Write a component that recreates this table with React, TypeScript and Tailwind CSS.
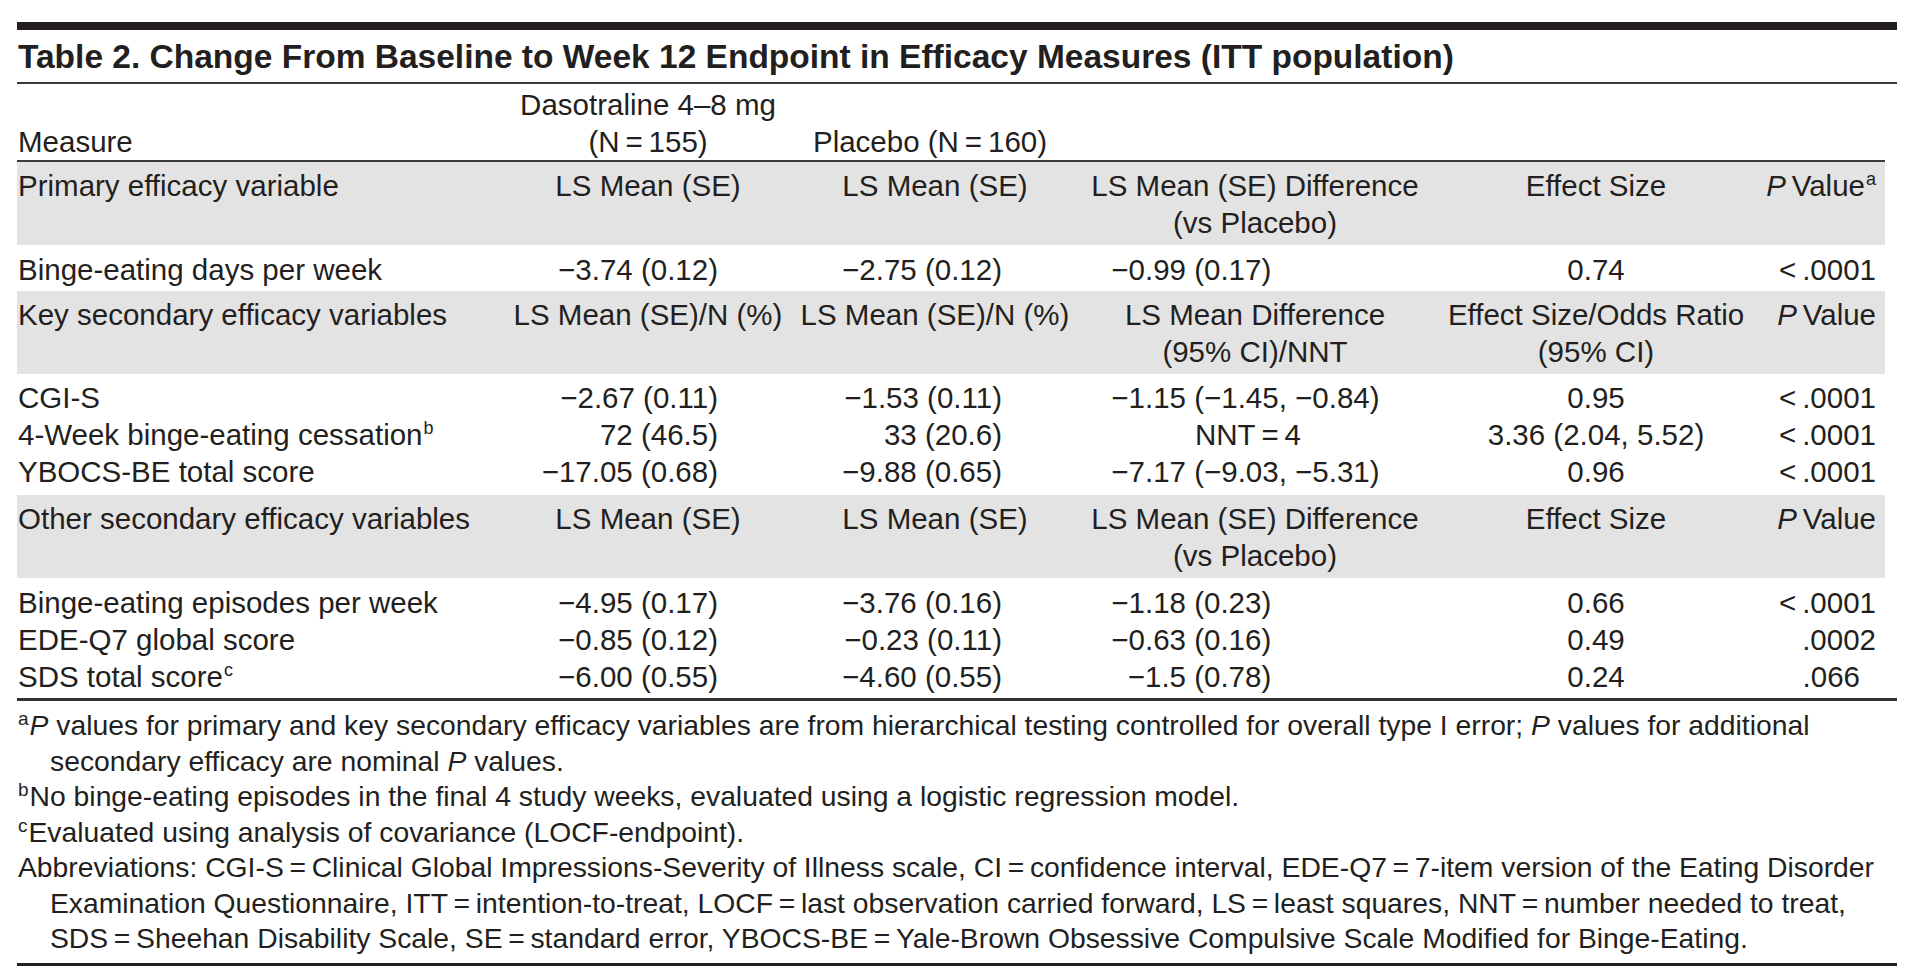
import React from 'react';

// minus sign and "=" with thin spaces, as the typeset table uses them
const M = '\u2212';
const EQ = '\u2009=\u2009';

const COLS = 'grid grid-cols-[483px_296px_278px_362px_320px_129px]';

const Sup = ({ children }: { children: React.ReactNode }) => (
  <sup className="text-[18px] top-[-11px] ml-[1px]">{children}</sup>
);

const PValue = ({ note }: { note?: string }) => (
  <span>
    <i>P</i>{'\u2009'}Value{note && <Sup>{note}</Sup>}
  </span>
);

interface HeadProps {
  label: string;
  c2: React.ReactNode;
  c3: React.ReactNode;
  c4: React.ReactNode;
  c5: React.ReactNode;
  c6: React.ReactNode;
}

const SectionHead = ({ label, c2, c3, c4, c5, c6 }: HeadProps) => (
  <div className={`${COLS} bg-[#e3e3e3] pt-[5px] pb-[4px]`}>
    <div className="pl-[1px]">{label}</div>
    <div className="text-center">{c2}</div>
    <div className="text-center">{c3}</div>
    <div className="text-center">{c4}</div>
    <div className="text-center">{c5}</div>
    <div className="text-right pr-[9px]">{c6}</div>
  </div>
);

interface Row {
  label: React.ReactNode;
  drug: string;
  placebo: string;
  diff: string;
  es: string;
  p: string;
  pShift?: boolean;
}

// difference column is aligned on the first number, like the print
const Diff = ({ v }: { v: string }) => {
  if (v.startsWith('NNT')) return <div className="text-center pr-[14px]">{v}</div>;
  const i = v.indexOf(' ');
  return (
    <div className="pl-[36px] whitespace-nowrap">
      <span className="inline-block w-[76px] text-right">{v.slice(0, i)}</span>
      {v.slice(i)}
    </div>
  );
};

const DataRow = ({ r }: { r: Row }) => (
  <div className={COLS}>
    <div className="pl-[1px] whitespace-nowrap">{r.label}</div>
    <div className="text-right pr-[78px]">{r.drug}</div>
    <div className="text-right pr-[72px]">{r.placebo}</div>
    <Diff v={r.diff} />
    <div className="text-center">{r.es}</div>
    <div className={r.pShift ? 'text-right pr-[25px]' : 'text-right pr-[9px]'}>{r.p}</div>
  </div>
);

const LT = '<\u2009.0001';

const primary: Row[] = [
  { label: 'Binge-eating days per week', drug: `${M}3.74 (0.12)`, placebo: `${M}2.75 (0.12)`, diff: `${M}0.99 (0.17)`, es: '0.74', p: LT },
];

const keySecondary: Row[] = [
  { label: 'CGI-S', drug: `${M}2.67 (0.11)`, placebo: `${M}1.53 (0.11)`, diff: `${M}1.15 (${M}1.45, ${M}0.84)`, es: '0.95', p: LT },
  {
    label: (
      <span>
        4-Week binge-eating cessation<Sup>b</Sup>
      </span>
    ),
    drug: '72 (46.5)',
    placebo: '33 (20.6)',
    diff: `NNT${EQ}4`,
    es: '3.36 (2.04, 5.52)',
    p: LT,
  },
  { label: 'YBOCS-BE total score', drug: `${M}17.05 (0.68)`, placebo: `${M}9.88 (0.65)`, diff: `${M}7.17 (${M}9.03, ${M}5.31)`, es: '0.96', p: LT },
];

const otherSecondary: Row[] = [
  { label: 'Binge-eating episodes per week', drug: `${M}4.95 (0.17)`, placebo: `${M}3.76 (0.16)`, diff: `${M}1.18 (0.23)`, es: '0.66', p: LT },
  { label: 'EDE-Q7 global score', drug: `${M}0.85 (0.12)`, placebo: `${M}0.23 (0.11)`, diff: `${M}0.63 (0.16)`, es: '0.49', p: '.0002' },
  {
    label: (
      <span>
        SDS total score<Sup>c</Sup>
      </span>
    ),
    drug: `${M}6.00 (0.55)`,
    placebo: `${M}4.60 (0.55)`,
    diff: `${M}1.5 (0.78)`,
    es: '0.24',
    p: '.066',
    pShift: true,
  },
];

const FootSup = ({ children }: { children: React.ReactNode }) => (
  <sup className="text-[19px] top-[-10px] mr-[1px]">{children}</sup>
);

export default function App() {
  return (
    <div className="min-h-screen bg-white text-[#231f20] font-['Liberation_Sans',Arial,sans-serif]">
      <div className="w-[1880px] ml-[17px] pt-[22px]">
        <div className="h-[8px] bg-[#231f20]" />
        <h1 className="mt-[7px] text-[33.5px] leading-[40px] font-bold whitespace-nowrap pl-[1px]">
          Table 2. Change From Baseline to Week 12 Endpoint in Efficacy Measures (ITT population)
        </h1>
        <div className="mt-[5px] h-[2px] bg-[#3a3a3a]" />

        <div className="text-[29.5px] leading-[37px]">
          {/* column heads */}
          <div className={`${COLS} pt-[2px] items-end`}>
            <div className="pl-[1px]">Measure</div>
            <div className="text-center">
              Dasotraline 4–8 mg
              <br />
              (N{EQ}155)
            </div>
            <div className="text-center pr-[10px] whitespace-nowrap">Placebo (N{EQ}160)</div>
            <div />
            <div />
            <div />
          </div>
          <div className="w-[1868px] h-[2px] bg-[#3a3a3a]" />

          <div className="w-[1868px]">
            <SectionHead
              label="Primary efficacy variable"
              c2="LS Mean (SE)"
              c3="LS Mean (SE)"
              c4={
                <>
                  LS Mean (SE) Difference
                  <br />
                  (vs Placebo)
                </>
              }
              c5="Effect Size"
              c6={<PValue note="a" />}
            />
            <div className="pt-[6px] pb-[3px]">
              {primary.map((r, i) => (
                <DataRow key={i} r={r} />
              ))}
            </div>

            <SectionHead
              label="Key secondary efficacy variables"
              c2="LS Mean (SE)/N (%)"
              c3="LS Mean (SE)/N (%)"
              c4={
                <>
                  LS Mean Difference
                  <br />
                  (95% CI)/NNT
                </>
              }
              c5={
                <>
                  Effect Size/Odds Ratio
                  <br />
                  (95% CI)
                </>
              }
              c6={<PValue />}
            />
            <div className="pt-[5px] pb-[5px]">
              {keySecondary.map((r, i) => (
                <DataRow key={i} r={r} />
              ))}
            </div>

            <SectionHead
              label="Other secondary efficacy variables"
              c2="LS Mean (SE)"
              c3="LS Mean (SE)"
              c4={
                <>
                  LS Mean (SE) Difference
                  <br />
                  (vs Placebo)
                </>
              }
              c5="Effect Size"
              c6={<PValue />}
            />
            <div className="pt-[6px] pb-[3px]">
              {otherSecondary.map((r, i) => (
                <DataRow key={i} r={r} />
              ))}
            </div>
          </div>
        </div>

        <div className="h-[3px] bg-[#333]" />

        {/* footnotes */}
        <div className="mt-[7px] text-[28.3px] leading-[35.5px] whitespace-nowrap pl-[1px]">
          <p className="pl-[32px] -indent-[32px]">
            <FootSup>a</FootSup>
            <i>P</i> values for primary and key secondary efficacy variables are from hierarchical testing controlled for
            overall type I error; <i>P</i> values for additional
            <br />
            secondary efficacy are nominal <i>P</i> values.
          </p>
          <p>
            <FootSup>b</FootSup>No binge-eating episodes in the final 4 study weeks, evaluated using a logistic regression
            model.
          </p>
          <p>
            <FootSup>c</FootSup>Evaluated using analysis of covariance (LOCF-endpoint).
          </p>
          <p className="pl-[32px] -indent-[32px]">
            Abbreviations: CGI-S{EQ}Clinical Global Impressions-Severity of Illness scale, CI{EQ}confidence interval,
            EDE-Q7{EQ}7-item version of the Eating Disorder
            <br />
            Examination Questionnaire, ITT{EQ}intention-to-treat, LOCF{EQ}last observation carried forward, LS{EQ}least
            squares, NNT{EQ}number needed to treat,
            <br />
            SDS{EQ}Sheehan Disability Scale, SE{EQ}standard error, YBOCS-BE{EQ}Yale-Brown Obsessive Compulsive Scale
            Modified for Binge-Eating.
          </p>
        </div>

        <div className="mt-[6px] h-[3px] bg-[#231f20]" />
      </div>
    </div>
  );
}
